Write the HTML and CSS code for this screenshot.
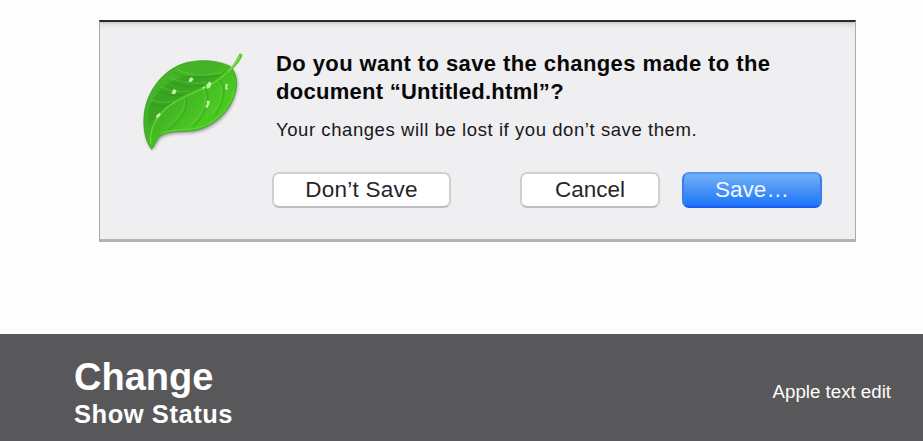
FILE: index.html
```html
<!DOCTYPE html>
<html lang="en">
<head>
<meta charset="utf-8">
<title>Show Status</title>
<link rel="stylesheet" href="styles.css">
</head>
<body>
<main class="stage">
  <section class="dialog">
    <svg class="leaf" viewBox="0 0 390 360" aria-hidden="true">
      <defs>
        <linearGradient id="blade" x1="0" y1="0" x2="1" y2="1">
          <stop offset="0" stop-color="#47b52b"/>
          <stop offset=".4" stop-color="#43b325"/>
          <stop offset=".65" stop-color="#4bc922"/>
          <stop offset="1" stop-color="#3cba1c"/>
        </linearGradient>
        <filter id="soft" x="-20%" y="-20%" width="140%" height="140%"><feGaussianBlur stdDeviation="5"/></filter>
        <filter id="fine"><feGaussianBlur stdDeviation="2"/></filter>
        <clipPath id="shape"><path d="M65 328C45 304 38 262 43 220C52 148 105 83 173 67C218 57 267 62 300 79C318 98 324 123 317 153C307 203 270 243 221 264C177 283 128 266 92 287C80 296 75 314 65 328Z"/></clipPath>
      </defs>
      <path class="leaf-shadow" filter="url(#soft)" d="M67 331C45 304 41 262 46 222C55 152 108 90 173 74C218 62 267 66 303 81C321 100 327 125 320 155C310 207 273 249 224 270C180 289 131 272 95 293C83 302 78 320 67 331Z"/>
      <path fill="url(#blade)" stroke="#37991d" stroke-width="2" d="M65 328C45 304 38 262 43 220C52 148 105 83 173 67C218 57 267 62 300 79C318 98 324 123 317 153C307 203 270 243 221 264C177 283 128 266 92 287C80 296 75 314 65 328Z"/>
      <g clip-path="url(#shape)" filter="url(#fine)">
        <path fill="#248d18" opacity=".35" d="M55 262C86 202 153 165 218 140C250 124 276 108 296 88C265 111 218 106 175 109C119 115 73 155 55 212Z"/>
        <path class="veins-dark" d="M128 96C170 116 219 116 266 106M108 119C144 139 179 143 218 137M80 151C112 168 139 168 166 166M58 191C86 199 103 198 121 194M168 172C178 205 150 246 116 268M224 143C247 180 225 229 187 262M264 116C296 145 280 190 254 227"/>
        <path class="veins-light" d="M139 88C181 108 227 108 278 99M118 111C157 130 194 133 231 127M91 140C122 157 149 156 180 153M64 180C91 190 108 188 132 182M161 174C171 204 143 239 108 260M218 144C240 178 216 226 179 256M258 119C288 145 273 187 247 220"/>
        <path fill="none" stroke="#66d537" stroke-width="4" opacity=".7" d="M92 282C128 261 177 277 221 258C270 237 303 195 312 151"/>
      </g>
      <path fill="none" stroke="#6ed83b" stroke-width="3.5" stroke-linecap="round" d="M62 310C59 269 78 229 116 199C153 171 196 157 234 139C260 126 279 109 296 92"/>
      <path fill="#5cc52b" d="M287 100C307 80 318 62 326 44C329 38 339 41 337 48C328 66 316 83 292 102Z"/>
      <path fill="none" stroke="#80e44c" stroke-width="4" d="M295 93C312 78 322 61 331 45"/>
      <g class="drops" filter="url(#fine)">
        <path d="M183 112L191 116L185 125L176 126L178 117Z"/>
        <path d="M132 147L140 152L135 162L125 162L127 153Z"/>
        <path d="M229 135L239 124L245 132L239 143L232 147Z"/>
        <path d="M230 182L240 183L238 192L231 205L226 200L231 192Z"/>
        <path d="M287 131L294 133L291 140L294 149L286 148Z"/>
        <path d="M80 236L79 226L90 218L92 225Z"/>
        <path d="M216 143L225 139L223 148Z"/>
      </g>
    </svg>
    <div class="content">
      <h1 class="question"><span class="q1">Do you want to save the changes made to the</span><br><span class="q2">document “Untitled.html”?</span></h1>
      <p class="note"><span class="n1">Your changes will be lost if you don’t save them.</span></p>
      <div class="actions">
        <button class="button discard"><span class="b1">Don’t Save</span></button>
        <button class="button cancel"><span class="b2">Cancel</span></button>
        <button class="button save"><span class="b3">Save…</span></button>
      </div>
    </div>
  </section>
</main>
<footer class="caption">
  <div class="titles">
    <h2 class="title">Change</h2>
    <p class="subtitle">Show Status</p>
  </div>
  <p class="source">Apple text edit</p>
</footer>
</body>
</html>
```
FILE: styles.css
```css
* { box-sizing: border-box; }
body {
  margin: 0;
  height: 441px;
  display: flex;
  flex-direction: column;
  background: #fefefe;
  font-family: "Liberation Sans", Arial, sans-serif;
  overflow: hidden;
}
h1, h2, p { margin: 0; }
.stage { height: 334px; padding: 20px 0 0 99px; }
.dialog {
  display: flex;
  width: 757px;
  height: 222px;
  padding: 18px 0 0 30px;
  border: 1px solid #aaa;
  border-top: 2px solid #292929;
  border-bottom: 3px solid #b4b4b4;
  background: linear-gradient(#c9c9ca, #e5e5e6 3px, #efeef0 8px);
}
.leaf { width: 130px; height: 120px; flex: none; }
.leaf-shadow { fill: #555; opacity: .5; }
.veins-dark { fill: none; stroke: #238e14; stroke-width: 4; opacity: .32; }
.veins-light { fill: none; stroke: #73d948; stroke-width: 4; opacity: .3; }
.drops { fill: #c4f5ac; }
.content { width: 562px; padding: 10px 0 0 12px; }
.question {
  padding-left: 4px;
  font-size: 22px;
  line-height: 28px;
  font-weight: 700;
  color: #080808;
  white-space: nowrap;
}
.q1 { letter-spacing: .41px; }
.q2 { letter-spacing: .27px; }
.note {
  padding-left: 4px;
  margin-top: 13px;
  font-size: 18.5px;
  line-height: 22px;
  color: #17171b;
  white-space: nowrap;
}
.n1 { letter-spacing: .57px; }
.actions { display: flex; margin-top: 31px; }
.button {
  height: 36px;
  padding: 0 0 1px;
  border: 2px solid #d0d0d2;
  border-bottom-color: #bdbdbf;
  border-radius: 7px;
  background: #fff;
  color: #25252a;
  font: 22.5px/30px "Liberation Sans", Arial, sans-serif;
}
.b1 { letter-spacing: .25px; }
.discard { width: 179px; }
.cancel { width: 140px; margin-left: 69px; }
.save {
  width: 140px;
  margin-left: 22px;
  border-color: #519cf2 #397eee #1c5df0;
  background: linear-gradient(#70b1f7, #438ff7 55%, #1f75fa);
  color: #f0f6ff;
}
.caption {
  height: 107px;
  display: flex;
  justify-content: space-between;
  padding: 22px 32px 0 74px;
  background: #58585a;
  color: #fff;
}
.title { font-size: 38px; line-height: 42px; }
.subtitle { font-size: 25.5px; line-height: 32px; font-weight: 700; letter-spacing: .55px; }
.source { padding-top: 25px; font-size: 18.7px; line-height: 22px; }
```
